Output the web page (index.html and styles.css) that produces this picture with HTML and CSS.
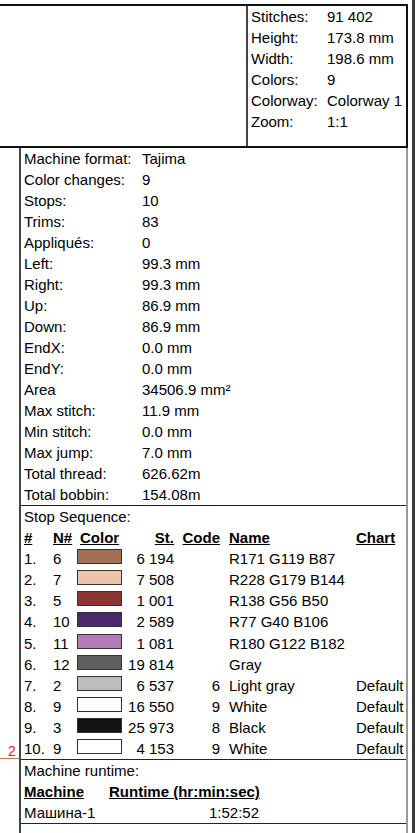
FILE: index.html
```html
<!DOCTYPE html>
<html lang="en">
<head>
    <meta charset="UTF-8">
    <meta name="viewport" content="width=device-width, initial-scale=1.0">
    <title>Design Report</title>
    <link rel="stylesheet" href="styles.css">
</head>
<body>
    <div class="sheet">
        <div class="report">
            <div class="summary">
                <div class="preview"></div>
                <dl class="info">
                    <dt>Stitches:</dt><dd>91 402</dd>
                    <dt>Height:</dt><dd>173.8 mm</dd>
                    <dt>Width:</dt><dd>198.6 mm</dd>
                    <dt>Colors:</dt><dd>9</dd>
                    <dt>Colorway:</dt><dd>Colorway 1</dd>
                    <dt>Zoom:</dt><dd>1:1</dd>
                </dl>
            </div>

            <div class="details">
                <dl class="stats">
                    <dt>Machine format:</dt><dd>Tajima</dd>
                    <dt>Color changes:</dt><dd>9</dd>
                    <dt>Stops:</dt><dd>10</dd>
                    <dt>Trims:</dt><dd>83</dd>
                    <dt>Appliqués:</dt><dd>0</dd>
                    <dt>Left:</dt><dd>99.3 mm</dd>
                    <dt>Right:</dt><dd>99.3 mm</dd>
                    <dt>Up:</dt><dd>86.9 mm</dd>
                    <dt>Down:</dt><dd>86.9 mm</dd>
                    <dt>EndX:</dt><dd>0.0 mm</dd>
                    <dt>EndY:</dt><dd>0.0 mm</dd>
                    <dt>Area</dt><dd>34506.9 mm²</dd>
                    <dt>Max stitch:</dt><dd>11.9 mm</dd>
                    <dt>Min stitch:</dt><dd>0.0 mm</dd>
                    <dt>Max jump:</dt><dd>7.0 mm</dd>
                    <dt>Total thread:</dt><dd>626.62m</dd>
                    <dt>Total bobbin:</dt><dd>154.08m</dd>
                </dl>

                <div class="stops">
                    <div class="caption">Stop Sequence:</div>
                    <div class="stop-table">
                        <span class="th">#</span>
                        <span class="th">N#</span>
                        <span class="th pad">Color</span>
                        <span class="th r">St.</span>
                        <span class="th r">Code</span>
                        <span class="th name">Name</span>
                        <span class="th">Chart</span>

                        <span>1.</span><span>6</span><span class="sw sw1"></span><span class="r">6 194</span><span class="r"></span><span class="name">R171 G119 B87</span><span></span>
                        <span>2.</span><span>7</span><span class="sw sw2"></span><span class="r">7 508</span><span class="r"></span><span class="name">R228 G179 B144</span><span></span>
                        <span>3.</span><span>5</span><span class="sw sw3"></span><span class="r">1 001</span><span class="r"></span><span class="name">R138 G56 B50</span><span></span>
                        <span>4.</span><span>10</span><span class="sw sw4"></span><span class="r">2 589</span><span class="r"></span><span class="name">R77 G40 B106</span><span></span>
                        <span>5.</span><span>11</span><span class="sw sw5"></span><span class="r">1 081</span><span class="r"></span><span class="name">R180 G122 B182</span><span></span>
                        <span>6.</span><span>12</span><span class="sw sw6"></span><span class="r">19 814</span><span class="r"></span><span class="name">Gray</span><span></span>
                        <span>7.</span><span>2</span><span class="sw sw7"></span><span class="r">6 537</span><span class="r">6</span><span class="name">Light gray</span><span>Default</span>
                        <span>8.</span><span>9</span><span class="sw sw8"></span><span class="r">16 550</span><span class="r">9</span><span class="name">White</span><span>Default</span>
                        <span>9.</span><span>3</span><span class="sw sw9"></span><span class="r">25 973</span><span class="r">8</span><span class="name">Black</span><span>Default</span>
                        <span>10.</span><span>9</span><span class="sw sw8"></span><span class="r">4 153</span><span class="r">9</span><span class="name">White</span><span>Default</span>
                    </div>
                    <div class="page-mark">2</div>
                </div>

                <div class="runtime">
                    <div class="caption">Machine runtime:</div>
                    <div class="runtime-table">
                        <span class="th">Machine</span>
                        <span class="th">Runtime (hr:min:sec)</span>
                        <span>Машина-1</span>
                        <span class="r">1:52:52</span>
                    </div>
                </div>
            </div>
        </div>
        <div class="edge"></div>
    </div>
</body>
</html>
```

FILE: styles.css
```css
* {
    box-sizing: border-box;
}
body {
    margin: 0;
    font-family: "Liberation Sans", Arial, sans-serif;
    font-size: 15px;
    color: #000;
    background-color: #fff;
}
dl, dd {
    margin: 0;
}
.sheet {
    display: flex;
    height: 100vh;
    overflow: hidden;
}
.report {
    width: 408px;
    display: flex;
    flex-direction: column;
    padding-top: 4px;
    white-space: nowrap;
}
.edge {
    width: 3px;
    margin-left: 4px;
    background-color: #3a3a3a;
}

/* header block */
.summary {
    display: flex;
    height: 144px;
    border-top: 2px solid #111;
    border-bottom: 2px solid #111;
    border-right: 2px solid #111;
}
.preview {
    width: 248px;
    border-right: 2px solid #444;
}
.info {
    display: grid;
    grid-template-columns: 76px auto;
    grid-auto-rows: 21.1px;
    line-height: 21.1px;
    align-content: start;
    padding-left: 3px;
}

/* body block */
.details {
    flex: 1;
    margin-left: 19px;
    border-left: 2px solid #444;
    border-right: 2px solid #999;
}
.stats {
    display: grid;
    grid-template-columns: 118px 1fr;
    grid-auto-rows: 21px;
    line-height: 21px;
    padding-left: 3px;
    border-bottom: 1px solid #222;
}
.caption {
    height: 21.1px;
    line-height: 21.1px;
    padding-left: 3px;
}
.stops {
    position: relative;
    border-bottom: 1px solid #222;
}
.stop-table {
    display: grid;
    grid-template-columns: 29px 24px 51px 46px 46px 136px 1fr;
    grid-auto-rows: 21.1px;
    line-height: 21.1px;
    padding-left: 3px;
}
.th {
    font-weight: bold;
    text-decoration: underline;
}
.r {
    text-align: right;
}
.pad {
    padding-left: 3px;
}
.name {
    padding-left: 9px;
}
.sw {
    align-self: start;
    width: 45px;
    height: 15px;
    margin-top: 1px;
    border: 1px solid #333;
}
.sw1 { background-color: #a3714f; }
.sw2 { background-color: #ecc4a8; }
.sw3 { background-color: #8a3732; }
.sw4 { background-color: #4d286a; }
.sw5 { background-color: #b47ab5; }
.sw6 { background-color: #5f5f5f; }
.sw7 { background-color: #bebebe; }
.sw8 { background-color: #fff; }
.sw9 { background-color: #121212; }

.page-mark {
    position: absolute;
    left: -21px;
    bottom: 0;
    width: 19px;
    padding-left: 8px;
    font-size: 14px;
    line-height: 13px;
    color: #e8202c;
    border-bottom: 1px solid #c47a3f;
}

.runtime {
    border-bottom: 1px solid #222;
}
.runtime-table {
    display: grid;
    grid-template-columns: 85px 150px;
    grid-auto-rows: 21.1px;
    line-height: 21.1px;
    padding-left: 3px;
}
```
